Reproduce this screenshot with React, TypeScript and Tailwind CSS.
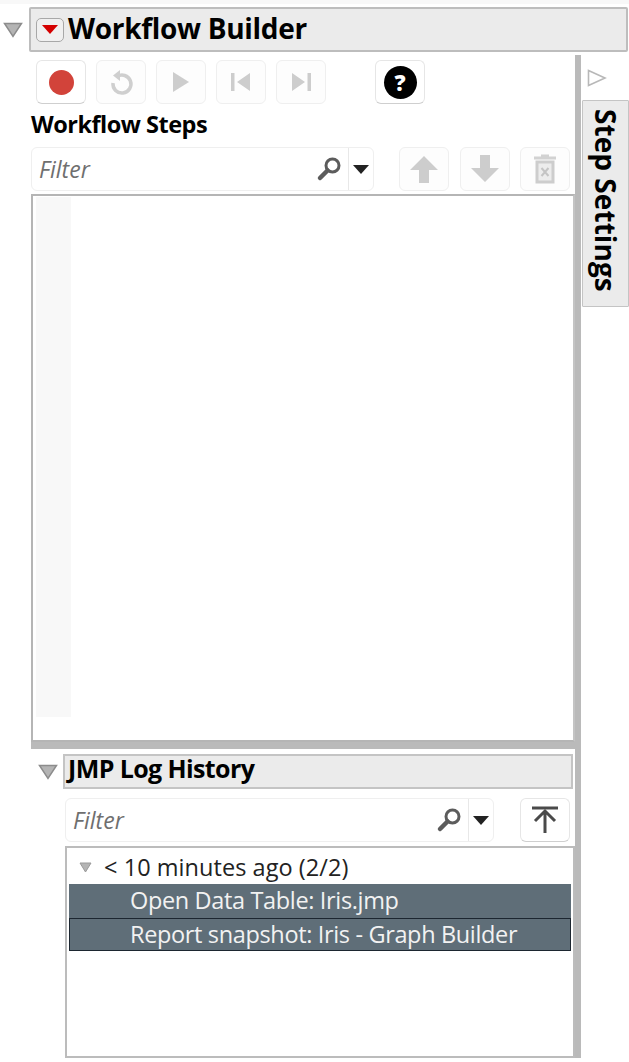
import type { ReactNode } from 'react';

const FONT = "font-['Open_Sans','Noto_Sans',sans-serif]";

function ToolButton({ children, active }: { children: ReactNode; active?: boolean }) {
  return (
    <div
      className={`flex h-[44px] w-[50px] shrink-0 items-center justify-center rounded-[6px] border ${
        active ? 'border-[#e6e6e6] border-b-[#cfcfcf] bg-white' : 'border-[#efefef] bg-[#fdfdfd]'
      }`}
    >
      {children}
    </div>
  );
}

function Triangle({ size = 'big' }: { size?: 'big' | 'small' }) {
  return size === 'big' ? (
    <svg width="20" height="16" viewBox="0 0 20 16">
      <path d="M1.5 1.5H18.5L10 14.5Z" fill="#b4b4b4" stroke="#8c8c8c" strokeWidth="1.5" />
    </svg>
  ) : (
    <svg width="13" height="11" viewBox="0 0 13 11">
      <path d="M1 1H12L6.5 10Z" fill="#b4b4b4" stroke="#9a9a9a" />
    </svg>
  );
}

function SearchIcon() {
  return (
    <svg width="28" height="28" viewBox="0 0 28 28" fill="none">
      <circle cx="16.5" cy="10.5" r="6.5" stroke="#5c5c5c" strokeWidth="3" />
      <path d="M11.5 15.5L4 23" stroke="#5c5c5c" strokeWidth="4.5" strokeLinecap="round" />
    </svg>
  );
}

function FilterField({ width }: { width: string }) {
  return (
    <div className={`flex h-[44px] items-center rounded-[6px] border border-[#efefef] bg-white ${width}`}>
      <span className={`${FONT} flex-1 pl-[7px] text-[23px] italic text-[#6f6f6f]`}>Filter</span>
      <SearchIcon />
      <div className="ml-[4px] flex h-full w-[25px] items-center justify-center border-l border-[#e8e8e8]">
        <svg width="16" height="9" viewBox="0 0 16 9">
          <path d="M0 0H16L8 9Z" fill="#222" />
        </svg>
      </div>
    </div>
  );
}

export default function App() {
  return (
    <div className={`${FONT} flex h-[1062px] w-[629px] flex-col overflow-hidden bg-white text-black`}>
      <div className="h-[4px] shrink-0 bg-[#f8f8f8]" />

      {/* Workflow Builder outline header */}
      <div className="mt-[3px] flex h-[45px] shrink-0 items-center pr-px">
        <div className="flex w-[29px] justify-center pr-[4px]">
          <Triangle />
        </div>
        <div className="flex h-full flex-1 items-center rounded-[2px] border-2 border-[#bdbdbd] bg-[#ebebeb] pl-[5px]">
          <div className="flex h-[24px] w-[28px] items-center justify-center rounded-[5px] border border-[#a8a8a8] bg-[#f0f0f0]">
            <svg width="16" height="9" viewBox="0 0 16 9">
              <path d="M0 0H16L8 9Z" fill="#d40000" />
            </svg>
          </div>
          <span className="mt-[-3px] ml-[4px] text-[28px] leading-none font-bold tracking-[-0.3px]">Workflow Builder</span>
        </div>
      </div>

      <div className="mt-[3px] flex min-h-0 flex-1">
        <div className="flex w-[575px] shrink-0 flex-col pl-[31px]">
          {/* Toolbar */}
          <div className="mt-[5px] flex h-[44px] gap-[10px] pl-[5px]">
            <ToolButton active>
              <div className="h-[25px] w-[25px] rounded-full bg-[#d2433a]" />
            </ToolButton>
            <ToolButton>
              <svg width="28" height="28" viewBox="0 0 28 28" fill="none">
                <path d="M10 8.5A9 9 0 1 1 6 15" stroke="#cfcfcf" strokeWidth="3.5" />
                <path d="M13 2V13L6 7.5Z" fill="#cfcfcf" />
              </svg>
            </ToolButton>
            <ToolButton>
              <svg width="18" height="22" viewBox="0 0 18 22">
                <path d="M1 1L17 11L1 21Z" fill="#cdcdcd" />
              </svg>
            </ToolButton>
            <ToolButton>
              <svg width="20" height="20" viewBox="0 0 20 20">
                <path d="M0 1H3.5V19H0ZM19 1V19L6 10Z" fill="#cdcdcd" />
              </svg>
            </ToolButton>
            <ToolButton>
              <svg width="20" height="20" viewBox="0 0 20 20">
                <path d="M20 1H16.5V19H20ZM1 1V19L14 10Z" fill="#cdcdcd" />
              </svg>
            </ToolButton>
            <div className="ml-[39px]">
              <ToolButton active>
                <div className="flex h-[33px] w-[33px] items-center justify-center rounded-full bg-black text-[22px] leading-none font-extrabold text-white">
                  ?
                </div>
              </ToolButton>
            </div>
          </div>

          <div className="mt-[8px] h-[26px] text-[23.5px] leading-[24px] font-bold tracking-[-0.5px]">Workflow Steps</div>

          {/* Filter and step buttons */}
          <div className="mt-[9px] flex h-[44px] items-center">
            <FilterField width="w-[343px]" />
            <div className="ml-[25px] flex gap-[10.5px]">
              <ToolButton>
                <svg width="30" height="28" viewBox="0 0 30 28">
                  <path d="M15 1L29 15H20V28H10V15H1Z" fill="#cdcdcd" />
                </svg>
              </ToolButton>
              <ToolButton>
                <svg width="30" height="28" viewBox="0 0 30 28">
                  <path d="M15 27L29 13H20V0H10V13H1Z" fill="#cdcdcd" />
                </svg>
              </ToolButton>
              <ToolButton>
                <svg width="24" height="30" viewBox="0 0 24 30" fill="none">
                  <path d="M1 4H23M8 2H16" stroke="#d2d2d2" strokeWidth="3" />
                  <rect x="4" y="8" width="16" height="20" stroke="#cdcdcd" strokeWidth="3" fill="#ececec" />
                  <path d="M8.5 14L15.5 22M15.5 14L8.5 22" stroke="#c4c4c4" strokeWidth="2" />
                </svg>
              </ToolButton>
            </div>
          </div>

          {/* Workflow steps list */}
          <div className="mt-[3px] h-[548px] shrink-0 border-2 border-[#b5b5b5] border-r-[#c4c4c4] bg-white pt-px pl-[3px]">
            <div className="h-[520px] w-[35px] bg-[#f8f8f8]" />
          </div>
          <div className="h-[7px] shrink-0 bg-[#bababa]" />

          {/* JMP Log History */}
          <div className="mt-[5px] flex h-[35px] shrink-0 items-center">
            <div className="flex w-[32px] justify-center pl-[1px]">
              <Triangle />
            </div>
            <div className="flex h-full w-[510px] items-center border-2 border-[#c4c4c4] bg-[#ebebeb] pl-[3px] text-[25px] font-bold tracking-[-0.6px]">
              <span className="mt-[-6px]">JMP Log History</span>
            </div>
          </div>

          <div className="mt-[9px] flex h-[44px] shrink-0 items-center pl-[34px]">
            <FilterField width="w-[429px]" />
            <div className="ml-[26px]">
              <ToolButton active>
                <svg width="30" height="30" viewBox="0 0 30 30" fill="none">
                  <path d="M2 3H28" stroke="#4a4a4a" strokeWidth="3" />
                  <path d="M15 28V6M5 16L15 6L25 16" stroke="#4a4a4a" strokeWidth="3" />
                </svg>
              </ToolButton>
            </div>
          </div>

          <div className="mt-[4px] ml-[34px] flex h-[212px] shrink-0 flex-col border-2 border-[#bcbcbc] bg-white px-[2px] pt-[3px] text-[23.5px] tracking-[-0.35px]">
            <div className="flex h-[33px] shrink-0 items-center text-[#222]">
              <div className="flex w-[35px] justify-center pr-[3px]">
                <Triangle size="small" />
              </div>
              <span className="tracking-[0.05px]">&lt; 10 minutes ago (2/2)</span>
            </div>
            <div className="flex h-[34px] shrink-0 items-center bg-[#5f6e78] pl-[61px] text-[#f2f2f2]">
              Open Data Table: Iris.jmp
            </div>
            <div className="flex h-[33px] shrink-0 items-center border border-[#1c2630] bg-[#5f6e78] pl-[60px] text-[#f2f2f2]">
              Report snapshot: Iris - Graph Builder
            </div>
          </div>
        </div>

        {/* Vertical splitter */}
        <div className="h-[1003px] w-[6px] shrink-0 bg-[#bababa]" />

        {/* Collapsed Step Settings tab */}
        <div className="flex flex-1 flex-col">
          <div className="flex h-[45px] items-center pl-[6px]">
            <svg width="20" height="18" viewBox="0 0 20 18" fill="none">
              <path d="M1.5 1.5L18 9L1.5 16.5Z" stroke="#b8b8b8" strokeWidth="1.6" fill="white" />
            </svg>
          </div>
          <div className="ml-px flex h-[207px] items-start justify-center rounded-[1px] border border-[#c4c4c4] bg-[#ebebeb] pt-[8px]">
            <span className="text-[28px] leading-none font-bold tracking-[0.05px] [writing-mode:vertical-rl]">Step Settings</span>
          </div>
        </div>
      </div>
    </div>
  );
}
